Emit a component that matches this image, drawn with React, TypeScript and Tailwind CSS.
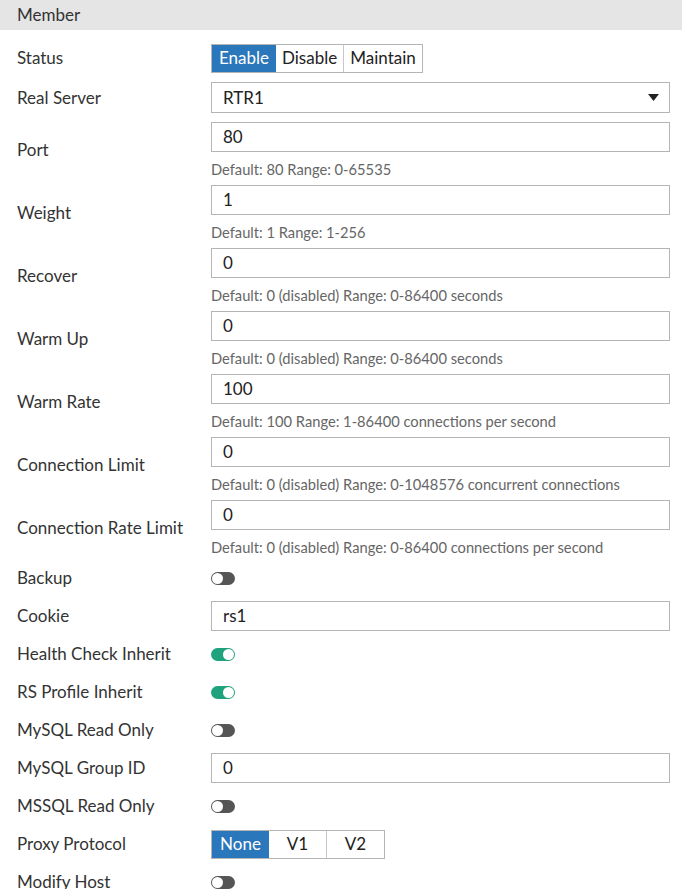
import React from "react";

const Label = ({ children }: { children: React.ReactNode }) => (
  <div className="w-[211px] shrink-0 pl-[17px] text-[17px] text-[#333]">{children}</div>
);

const Input = ({ value }: { value: string }) => (
  <div className="h-[30px] w-[459px] border border-[#b5b5b5] bg-white pl-[11px] flex items-center text-[17px] text-[#222]">{value}</div>
);

const HelpRow = ({ label, value, help }: { label: string; value: string; help: string }) => (
  <div className="flex h-[63px] items-center">
    <Label>{label}</Label>
    <div className="self-start pt-[4px]">
      <Input value={value} />
      <div className="mt-[9px] leading-[16px] text-[14.7px] text-[#666]">{help}</div>
    </div>
  </div>
);

const Toggle = ({ on }: { on?: boolean }) => (
  <div className={`relative h-[13px] w-[24px] rounded-full ${on ? "bg-[#1fa37e]" : "bg-[#555]"}`}>
    <div className={`absolute top-[1px] h-[11px] w-[11px] rounded-full bg-white ${on ? "left-[12px]" : "left-[1px]"}`} />
  </div>
);

const Row = ({ label, children }: { label: string; children: React.ReactNode }) => (
  <div className="flex h-[38px] items-center">
    <Label>{label}</Label>
    <div>{children}</div>
  </div>
);

export default function App() {
  return (
    <div className="w-[682px] h-[889px] overflow-hidden bg-white" style={{ fontFamily: "Lato, 'Open Sans', sans-serif" }}>
      <div className="h-[30px] bg-[#e5e5e5] pl-[17px] flex items-center text-[17px] text-[#333]">Member</div>
      <div className="h-[9px]" />
      <Row label="Status">
        <div className="flex h-[29px] border border-[#b5b5b5] text-[17px]">
          <div className="bg-[#2b77bb] text-white px-[7px] flex items-center">Enable</div>
          <div className="px-[6px] flex items-center border-r border-[#c8c8c8] text-[#222]">Disable</div>
          <div className="px-[6px] flex items-center text-[#222]">Maintain</div>
        </div>
      </Row>
      <div className="flex h-[41px] items-center">
        <Label>Real Server</Label>
        <div className="h-[31px] w-[459px] border border-[#b5b5b5] pl-[11px] pr-[10px] flex items-center justify-between text-[17px] text-[#222]">
          <span>RTR1</span>
          <svg width="11" height="7" viewBox="0 0 11 7"><path d="M0 0h11L5.5 7z" fill="#222" /></svg>
        </div>
      </div>
      <HelpRow label="Port" value="80" help="Default: 80 Range: 0-65535" />
      <HelpRow label="Weight" value="1" help="Default: 1 Range: 1-256" />
      <HelpRow label="Recover" value="0" help="Default: 0 (disabled) Range: 0-86400 seconds" />
      <HelpRow label="Warm Up" value="0" help="Default: 0 (disabled) Range: 0-86400 seconds" />
      <HelpRow label="Warm Rate" value="100" help="Default: 100 Range: 1-86400 connections per second" />
      <HelpRow label="Connection Limit" value="0" help="Default: 0 (disabled) Range: 0-1048576 concurrent connections" />
      <HelpRow label="Connection Rate Limit" value="0" help="Default: 0 (disabled) Range: 0-86400 connections per second" />
      <Row label="Backup"><Toggle /></Row>
      <Row label="Cookie"><Input value="rs1" /></Row>
      <Row label="Health Check Inherit"><Toggle on /></Row>
      <Row label="RS Profile Inherit"><Toggle on /></Row>
      <Row label="MySQL Read Only"><Toggle /></Row>
      <Row label="MySQL Group ID"><Input value="0" /></Row>
      <Row label="MSSQL Read Only"><Toggle /></Row>
      <Row label="Proxy Protocol">
        <div className="flex h-[29px] border border-[#b5b5b5] text-[17px]">
          <div className="w-[57px] bg-[#2b77bb] text-white flex items-center justify-center">None</div>
          <div className="w-[58px] flex items-center justify-center border-r border-[#c8c8c8] text-[#222]">V1</div>
          <div className="w-[57px] flex items-center justify-center text-[#222]">V2</div>
        </div>
      </Row>
      <Row label="Modify Host"><Toggle /></Row>
    </div>
  );
}
